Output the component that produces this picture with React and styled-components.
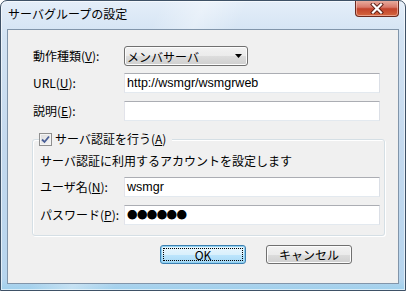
import React from "react";
import styled, { createGlobalStyle } from "styled-components";

const Global = createGlobalStyle`
  html, body { margin: 0; padding: 0; background: #ffffff; }
  body {
    font-family: "Noto Sans CJK JP", "Noto Sans", sans-serif;
    font-size: 12px;
    color: #000;
  }
`;

const Window = styled.div`
  width: 406px;
  height: 291px;
  box-sizing: border-box;
  display: flex;
  flex-direction: column;
  border: 1px solid #3e5166;
  border-radius: 7px 7px 0 0;
  padding: 0 6px 6px 6px;
  overflow: hidden;
  background:
    linear-gradient(115deg, rgba(255,255,255,0) 30%, rgba(255,255,255,0.35) 38%, rgba(255,255,255,0) 46%),
    linear-gradient(180deg, #e4eef9 0%, #d3e3f3 12%, #c4d9ee 50%, #b7d5ee 96%, #9fd0ec 100%);
  box-shadow: inset 0 0 0 1px rgba(255,255,255,0.6);
`;

const TitleBar = styled.div`
  height: 28px;
  display: flex;
  align-items: flex-start;
  justify-content: space-between;
`;

const Title = styled.div`
  padding: 5px 0 0 1px;
  font-size: 12px;
  line-height: 16px;
  color: #000;
`;

const CloseButton = styled.div`
  width: 44px;
  height: 17px;
  margin-top: -1px;
  box-sizing: border-box;
  display: flex;
  align-items: center;
  justify-content: center;
  border: 1px solid #6b2a1f;
  border-top: none;
  border-radius: 0 0 4px 4px;
  background: linear-gradient(180deg, #eab3a5 0%, #d9796a 45%, #c2432c 55%, #d4673f 100%);
  box-shadow: inset 0 0 0 1px rgba(255,210,200,0.55);
`;

const Client = styled.div`
  flex: 1;
  display: flex;
  flex-direction: column;
  border: 1px solid #8195aa;
  background: #f0f0f0;
  padding: 16px 13px 0 24px;
`;

const FieldRow = styled.div`
  display: grid;
  grid-template-columns: ${(p) => p.$labelWidth}px 256px;
  align-items: center;
  height: 20px;
  margin-top: ${(p) => p.$top || 0}px;
  padding-left: ${(p) => p.$indent || 0}px;
`;

const Label = styled.div`
  font-size: 12px;
  line-height: 14px;
  white-space: nowrap;
  u { text-decoration: underline; text-underline-offset: 1px; }
`;

const TextBox = styled.div`
  height: 20px;
  box-sizing: border-box;
  display: flex;
  align-items: center;
  padding: 0 2px;
  background: #fff;
  border: 1px solid;
  border-color: #abadb3 #dbdfe6 #e3e9ef #e2e3ea;
  font-family: "Liberation Sans", "Noto Sans CJK JP", sans-serif;
  font-size: 12.5px;
  white-space: nowrap;
  overflow: hidden;
`;

const Mask = styled.span`
  font-family: "Noto Sans CJK JP", sans-serif;
  font-size: 10.5px;
  letter-spacing: -0.6px;
  line-height: 1;
`;

const Select = styled.div`
  width: 124px;
  height: 20px;
  box-sizing: border-box;
  display: flex;
  align-items: center;
  justify-content: space-between;
  padding: 0 5px 0 2px;
  border: 1px solid #707070;
  border-radius: 3px;
  background: linear-gradient(180deg, #f2f2f2 0%, #ebebeb 50%, #dddddd 50%, #cfcfcf 100%);
  box-shadow: inset 0 0 0 1px #fcfcfc;
  font-size: 12px;
`;

const Group = styled.fieldset`
  margin: 11px 0 0 0;
  padding: 0 5px 10px 7px;
  min-width: 0;
  border: 1px solid #d5dfe5;
  border-radius: 3px;
  box-shadow: inset 1px 1px 0 #ffffff, 1px 1px 0 #ffffff;
`;

const Legend = styled.legend`
  display: flex;
  align-items: center;
  gap: 3px;
  height: 14px;
  padding: 0 6px 0 0;
  margin-left: -1px;
  background: #f0f0f0;
  font-size: 12px;
  line-height: 14px;
  u { text-decoration: underline; text-underline-offset: 1px; }
`;

const CheckBox = styled.span`
  width: 13px;
  height: 13px;
  box-sizing: border-box;
  display: flex;
  align-items: center;
  justify-content: center;
  border: 1px solid #8f8f8f;
  background: linear-gradient(135deg, #dcdcdc 0%, #f6f6f6 100%);
  box-shadow: inset 0 0 0 1px #f4f4f4;
`;

const Note = styled.div`
  margin-top: 8px;
  font-size: 12px;
  line-height: 14px;
`;

const Buttons = styled.div`
  display: flex;
  justify-content: flex-end;
  gap: 20px;
  margin-top: 9px;
  padding-right: 33px;
`;

const Button = styled.button`
  position: relative;
  width: 86px;
  height: 19px;
  box-sizing: border-box;
  padding: 0;
  border: 1px solid ${(p) => (p.$default ? "#3c7fb1" : "#707070")};
  border-radius: 3px;
  background: ${(p) =>
    p.$default
      ? "linear-gradient(180deg, #eaf6fd 0%, #d9f0fc 50%, #bee6fd 50%, #a7d9f5 100%)"
      : "linear-gradient(180deg, #f2f2f2 0%, #ebebeb 50%, #dddddd 50%, #cfcfcf 100%)"};
  box-shadow: inset 0 0 0 1px ${(p) => (p.$default ? "#8fd0f0" : "#fcfcfc")};
  font-family: "Noto Sans CJK JP", "Noto Sans", sans-serif;
  font-size: 12px;
  line-height: 14px;
  color: #000;

  &::after {
    content: "";
    display: ${(p) => (p.$default ? "block" : "none")};
    position: absolute;
    inset: 2px;
    border: 1px dotted #000;
  }
`;

const AccessLabel = ({ text, keyChar }) => (
  <Label>
    {text}(<u>{keyChar}</u>):
  </Label>
);

export default function App() {
  return (
    <>
      <Global />
      <Window>
        <TitleBar>
          <Title>サーバグループの設定</Title>
          <CloseButton>
            <svg width="14" height="11" viewBox="0 0 14 11">
              <path d="M3 1.5 L11 9.5 M11 1.5 L3 9.5" stroke="#5a1d14" strokeWidth="4" strokeLinecap="square" />
              <path d="M3 1.5 L11 9.5 M11 1.5 L3 9.5" stroke="#ffffff" strokeWidth="2.2" strokeLinecap="square" />
            </svg>
          </CloseButton>
        </TitleBar>
        <Client>
          <FieldRow $labelWidth={91} $indent={1}>
            <AccessLabel text="動作種類" keyChar="V" />
            <Select>
              <span>メンバサーバ</span>
              <svg width="7" height="4" viewBox="0 0 7 4">
                <path d="M0 0 H7 L3.5 4 Z" fill="#000" />
              </svg>
            </Select>
          </FieldRow>
          <FieldRow $labelWidth={91} $indent={1} $top={7}>
            <AccessLabel text="URL" keyChar="U" />
            <TextBox>http://wsmgr/wsmgrweb</TextBox>
          </FieldRow>
          <FieldRow $labelWidth={91} $indent={1} $top={8}>
            <AccessLabel text="説明" keyChar="E" />
            <TextBox />
          </FieldRow>

          <Group>
            <Legend>
              <CheckBox>
                <svg width="9" height="9" viewBox="0 0 9 9">
                  <path d="M1 4.5 L3.5 7 L8 1.5" stroke="#4a5f97" strokeWidth="1.8" fill="none" />
                </svg>
              </CheckBox>
              <span>
                サーバ認証を行う(<u>A</u>)
              </span>
            </Legend>
            <Note>サーバ認証に利用するアカウントを設定します</Note>
            <FieldRow $labelWidth={84} $top={9}>
              <AccessLabel text="ユーザ名" keyChar="N" />
              <TextBox>wsmgr</TextBox>
            </FieldRow>
            <FieldRow $labelWidth={84} $top={8}>
              <AccessLabel text="パスワード" keyChar="P" />
              <TextBox>
                <Mask>●●●●●●</Mask>
              </TextBox>
            </FieldRow>
          </Group>

          <Buttons>
            <Button $default>OK</Button>
            <Button>キャンセル</Button>
          </Buttons>
        </Client>
      </Window>
    </>
  );
}
